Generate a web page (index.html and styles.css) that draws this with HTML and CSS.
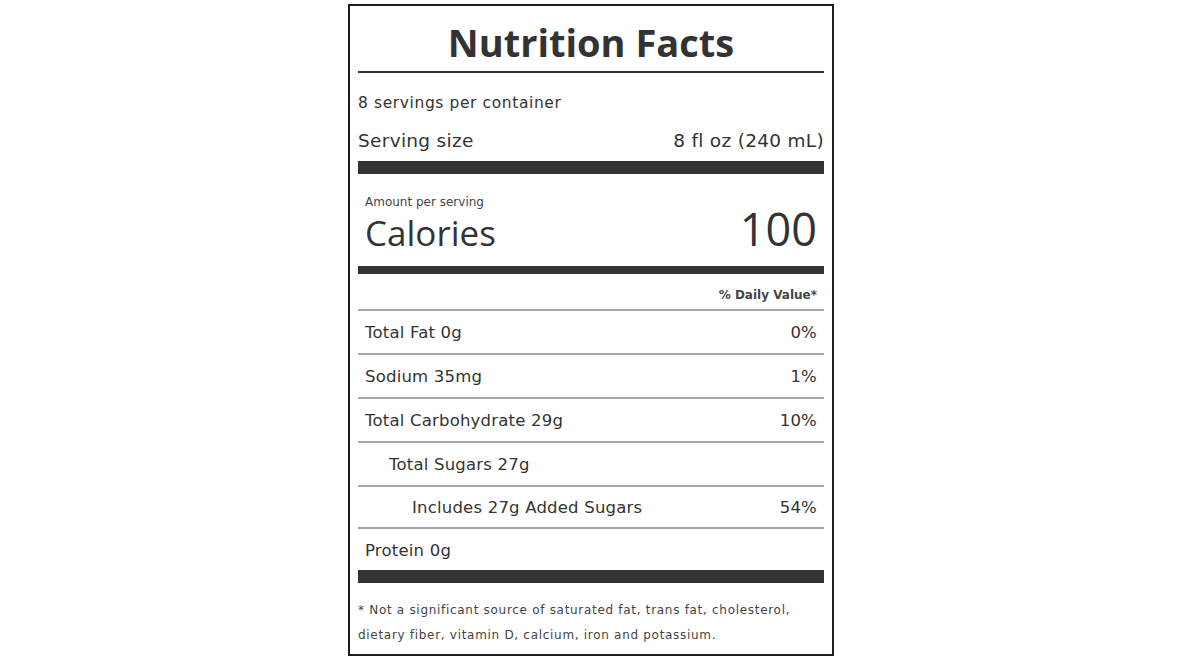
FILE: index.html
```html
<!DOCTYPE html>
<html lang="en">
<head>
<meta charset="utf-8">
<title>Nutrition Facts</title>
<link rel="stylesheet" href="styles.css">
</head>
<body>
<div class="label">
  <h1 class="title">Nutrition Facts</h1>
  <div class="servings">8 servings per container</div>
  <div class="serving-size"><span>Serving size</span><span>8 fl oz (240 mL)</span></div>
  <div class="bar bar-thick"></div>
  <div class="calories">
    <div class="amount">Amount per serving</div>
    <div class="cal-row"><span class="cal-label">Calories</span><span class="cal-value">100</span></div>
  </div>
  <div class="bar bar-mid"></div>
  <div class="dv">% Daily Value*</div>
  <div class="row"><span>Total Fat 0g</span><span>0%</span></div>
  <div class="row"><span>Sodium 35mg</span><span>1%</span></div>
  <div class="row"><span>Total Carbohydrate 29g</span><span>10%</span></div>
  <div class="row indent1"><span>Total Sugars 27g</span><span></span></div>
  <div class="row indent2"><span>Includes 27g Added Sugars</span><span>54%</span></div>
  <div class="row last"><span>Protein 0g</span><span></span></div>
  <div class="bar bar-bottom"></div>
  <p class="foot">* Not a significant source of saturated fat, trans fat, cholesterol, dietary fiber, vitamin D, calcium, iron and potassium.</p>
</div>
</body>
</html>
```

FILE: styles.css
```css
html, body { margin: 0; padding: 0; background: #fff; }
body {
  font-family: "DejaVu Sans", "Liberation Sans", sans-serif;
  color: #333;
  display: flex;
  justify-content: center;
}
.label {
  margin-top: 4px;
  margin-left: -12px;
  width: 466px;
  height: 648px;
  border: 2px solid #1e1e1e;
  padding: 0 8px;
  box-sizing: content-box;
}
.title {
  margin: 0;
  height: 65px;
  border-bottom: 2px solid #333;
  font-family: "Open Sans", sans-serif;
  font-size: 38px;
  font-weight: 700;
  text-align: center;
  line-height: 72px;
  color: #333;
}
.servings {
  margin-top: 20px;
  font-size: 15.5px;
  line-height: 20px;
  letter-spacing: 0.6px;
}
.serving-size {
  margin-top: 16px;
  display: flex;
  justify-content: space-between;
  font-size: 18.5px;
  line-height: 24px;
  letter-spacing: 0.3px;
}
.bar { background: #333; }
.bar-thick { height: 13px; margin-top: 8px; }
.bar-bottom { height: 13px; }
.calories { padding: 0 7px; }
.amount {
  margin-top: 22px;
  font-size: 12px;
  line-height: 12px;
  color: #444;
}
.cal-row {
  display: flex;
  justify-content: space-between;
  align-items: baseline;
  height: 60px;
  margin-top: -2px;
  font-family: "Open Sans", sans-serif;
}
.cal-label { font-size: 35px; line-height: 36px; }
.cal-value { font-size: 45px; line-height: 46px; }
.bar-mid { height: 8px; }
.dv {
  text-align: right;
  font-size: 12px;
  font-weight: 700;
  padding: 0 7px;
  height: 35px;
  line-height: 42px;
  color: #444;
  border-bottom: 2px solid #a6a6a6;
}
.row {
  display: flex;
  justify-content: space-between;
  align-items: center;
  height: 42px;
  padding: 0 7px;
  font-size: 16.5px;
  letter-spacing: 0.2px;
  border-bottom: 2px solid #a6a6a6;
}
.indent1 { padding-left: 31px; }
.indent2 { padding-left: 54px; height: 40px; }
.row.last { border-bottom: none; height: 39px; padding-top: 2px; }
.foot {
  margin: 15px 0 0;
  font-size: 12px;
  line-height: 25px;
  letter-spacing: 0.7px;
  color: #444;
}
```
